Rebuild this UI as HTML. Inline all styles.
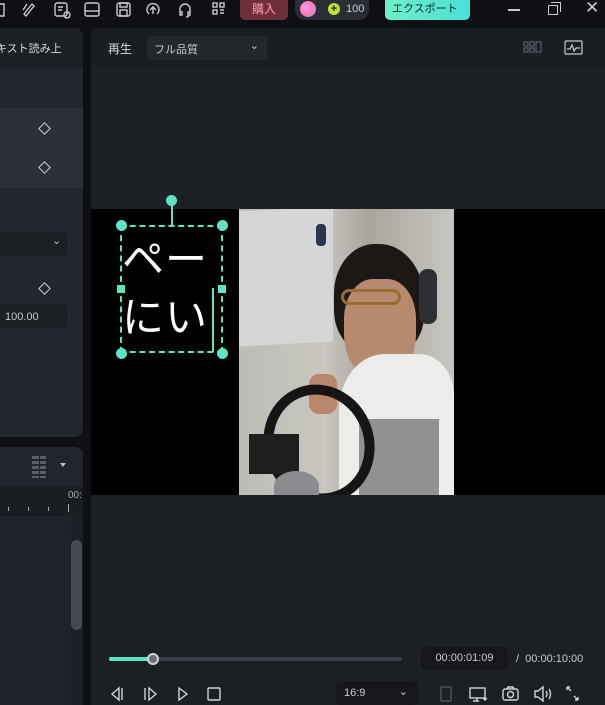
<!DOCTYPE html>
<html><head><meta charset="utf-8"><style>
*{margin:0;padding:0;box-sizing:border-box}
body{width:605px;height:705px;background:#0e1013;position:relative;overflow:hidden;font-family:"Liberation Sans","Noto Sans CJK JP",sans-serif;color:#d0d3d8}
.a{position:absolute}
</style></head><body>
<div class="a" style="left:0;top:0;width:605px;height:24px;background:#0e1013"></div>
<svg class="a" style="left:0;top:0" width="248" height="20" fill="none" stroke="#c8ccd2" stroke-width="1.4">
<path d="M-2 4h6v12h-6"/>
<path d="M24 14 L32 4 L34 6 L26 16Z M23 10 L27 4"/>
<rect x="55" y="3" width="12" height="13" rx="2"/><path d="M58 7h5M58 10h4"/><circle cx="67" cy="15" r="3"/>
<rect x="85" y="3" width="14" height="13" rx="2"/><path d="M85 11h14"/>
<rect x="117" y="3" width="13" height="13" rx="2"/><rect x="120" y="3" width="7" height="4"/><rect x="120" y="10" width="7" height="6"/>
<path d="M149 14 a6 6 0 1 1 8 0 M153 7v7 M150 10l3-3 3 3"/>
<path d="M180 13v-4a5 5 0 0 1 10 0v4 M180 12h2v3h-2z M188 12h2v3h-2z M189 15q0 2-3 2"/>
<rect x="213" y="3" width="4" height="4"/><rect x="220" y="3" width="4" height="4"/><rect x="213" y="10" width="4" height="4"/><path d="M220 10h4M220 13h4"/>
</svg>
<div class="a" style="left:240px;top:0;width:48px;height:20px;background:#6e2f3b;border-radius:0 0 5px 5px;color:#ff9aa8;font-size:12px;text-align:center;line-height:18px">購入</div>
<div class="a" style="left:295px;top:0;width:74px;height:20px;background:#2a2d33;border-radius:0 0 10px 10px"></div>
<div class="a" style="left:300px;top:1px;width:16px;height:16px;border-radius:50%;background:radial-gradient(circle at 40% 40%,#e8a0ff,#ff7ab0 50%,#6aa8ff)"></div>
<div class="a" style="left:328px;top:3px;width:12px;height:12px;border-radius:50%;background:#b9e23a;color:#222;font-size:11px;line-height:12px;text-align:center;font-weight:bold">+</div>
<div class="a" style="left:346px;top:3px;font-size:11px;color:#c8ccd2">100</div>
<div class="a" style="left:385px;top:0;width:85px;height:20px;background:linear-gradient(90deg,#6ef0c8,#48e0d8);border-radius:0 0 5px 5px;color:#0d2a26;font-size:11px;line-height:18px;padding-left:7px">エクスポート &nbsp;⌄</div>
<div class="a" style="left:508px;top:9px;width:12px;height:1.5px;background:#c8ccd2"></div>
<div class="a" style="left:548px;top:5px;width:10px;height:10px;border:1.4px solid #c8ccd2"></div>
<div class="a" style="left:551px;top:2px;width:10px;height:10px;border-top:1.4px solid #c8ccd2;border-right:1.4px solid #c8ccd2"></div>
<div class="a" style="left:585px;top:-2px;font-size:17px;color:#c8ccd2">✕</div>

<div class="a" style="left:0;top:28px;width:83px;height:409px;background:#23272d;border-radius:0 8px 8px 0;overflow:hidden">
 <div class="a" style="left:0;top:0;width:83px;height:40px;background:#1c1f24"></div>
 <div class="a" style="left:-4px;top:12px;font-size:11px;color:#d8dbe0;white-space:nowrap">キスト読み上</div>
 <div class="a" style="left:0;top:80px;width:83px;height:80px;background:#2c3138"></div>
 <div class="a" style="left:40px;top:96px;width:9px;height:9px;border:1.3px solid #d0d3d8;transform:rotate(45deg)"></div>
 <div class="a" style="left:40px;top:135px;width:9px;height:9px;border:1.3px solid #d0d3d8;transform:rotate(45deg)"></div>
 <div class="a" style="left:0;top:204px;width:67px;height:24px;background:#1b1e22;border-radius:0 5px 5px 0"></div>
 <div class="a" style="left:52px;top:206px;font-size:11px;color:#c0c4ca">⌄</div>
 <div class="a" style="left:40px;top:256px;width:9px;height:9px;border:1.3px solid #d0d3d8;transform:rotate(45deg)"></div>
 <div class="a" style="left:0;top:276px;width:67px;height:24px;background:#1b1e22;border-radius:0 5px 5px 0"></div>
 <div class="a" style="left:5px;top:283px;font-size:11px;color:#c8ccd2">100.00</div>
</div>
<div class="a" style="left:0;top:447px;width:83px;height:258px;background:#20242a;border-radius:0 8px 0 0;overflow:hidden">
 <div class="a" style="left:0;top:0;width:83px;height:39px;background:#22262c"></div>
 <div class="a" style="left:32px;top:9px;width:14px;height:22px;background:repeating-linear-gradient(#5a5f67 0 3px,transparent 3px 5px)"></div>
 <div class="a" style="left:38.5px;top:9px;width:1px;height:22px;background:#22262c"></div>
 <div class="a" style="left:60px;top:16px;border:3px solid transparent;border-top:4px solid #c0c4ca"></div>
 <div class="a" style="left:0;top:39px;width:83px;height:30px;background:#1a1d21"></div>
 <div class="a" style="left:68px;top:43px;font-size:10px;color:#a8acb2">00:</div>
 <div class="a" style="left:8px;top:60px;width:1px;height:4px;background:#aaa"></div>
 <div class="a" style="left:28px;top:60px;width:1px;height:4px;background:#aaa"></div>
 <div class="a" style="left:48px;top:60px;width:1px;height:4px;background:#aaa"></div>
 <div class="a" style="left:68px;top:57px;width:1px;height:8px;background:#aaa"></div>
 <div class="a" style="left:71px;top:69px;width:12px;height:189px;background:#1c1f23"></div>
 <div class="a" style="left:71px;top:93px;width:11px;height:90px;background:#464b53;border-radius:6px"></div>
</div>

<div class="a" style="left:91px;top:28px;width:514px;height:677px;background:#1c1f23;border-radius:8px 0 0 0;overflow:hidden">
 <div class="a" style="left:0;top:0;width:514px;height:40px;background:#1a1d21"></div>
 <div class="a" style="left:17px;top:12px;font-size:12px;color:#d8dbe0">再生</div>
 <div class="a" style="left:56px;top:8px;width:120px;height:24px;background:#24282d;border-radius:5px;font-size:11px;color:#c8ccd2;padding:5px 7px">フル品質<span style="position:absolute;right:8px;top:3px">⌄</span></div>
 <svg class="a" style="left:432px;top:12px" width="64" height="16" fill="none" stroke-width="1.2">
  <g stroke="#5a5f67"><rect x="1" y="2" width="4" height="4"/><rect x="7" y="2" width="4" height="4"/><rect x="1" y="8" width="4" height="4"/><rect x="7" y="8" width="4" height="4"/><rect x="13" y="2" width="5" height="10"/></g>
  <g stroke="#c8ccd2"><rect x="42" y="1" width="17" height="13" rx="1"/><path d="M44 9l3 0 2-4 2 6 2-3 4 0"/></g>
 </svg>
 <div class="a" style="left:0;top:40px;width:514px;height:141px;background:#1d2024"></div>
 <div class="a" style="left:0;top:181px;width:514px;height:286px;background:#000"></div>
 <div class="a" style="left:148px;top:181px;width:215px;height:286px;overflow:hidden;background:#b8b4aa">
  <div class="a" style="left:0;top:0;width:215px;height:286px;background:linear-gradient(90deg,#bdbcb6 0,#c8c6bf 40%,#a8a59c 60%,#c7c6c0 100%)"></div>
  <div class="a" style="left:0;top:0;width:94px;height:135px;background:#d4d6d8;transform:skewY(-3deg)"></div>
  <div class="a" style="left:77px;top:15px;width:10px;height:22px;background:#2a3550;border-radius:4px"></div>
  <div class="a" style="left:95px;top:35px;width:90px;height:110px;background:#1c1816;border-radius:45% 50% 35% 40%"></div>
  <div class="a" style="left:105px;top:70px;width:72px;height:100px;background:#b68a6e;border-radius:40% 40% 45% 45%"></div>
  <div class="a" style="left:102px;top:80px;width:60px;height:16px;border:3px solid #9a6a30;border-radius:8px"></div>
  <div class="a" style="left:180px;top:60px;width:18px;height:55px;background:#2d2f33;border-radius:8px"></div>
  <div class="a" style="left:100px;top:145px;width:115px;height:141px;background:#ececea;border-radius:40% 30% 0 0"></div>
  <div class="a" style="left:120px;top:210px;width:80px;height:76px;background:#555;opacity:.6"></div>
  <div class="a" style="left:70px;top:165px;width:28px;height:40px;background:#b8866a;border-radius:10px"></div>
  <div class="a" style="left:25px;top:175px;width:110px;height:120px;border:10px solid #151515;border-radius:50%;transform:rotate(-20deg)"></div>
  <div class="a" style="left:10px;top:225px;width:50px;height:40px;background:#1e1e1e"></div>
  <div class="a" style="left:35px;top:262px;width:45px;height:30px;background:#8a8c90;border-radius:50% 50% 0 0"></div>
 </div>
 <div class="a" style="left:29px;top:197px;width:103px;height:128px;border:2px dashed #5fe3c4"></div>
 <div class="a" style="left:80px;top:172px;width:2px;height:25px;background:#5fe3c4"></div>
 <div class="a" style="left:75px;top:167px;width:11px;height:11px;border-radius:50%;background:#5fe3c4"></div>
 <div class="a" style="left:25px;top:192px;width:11px;height:11px;border-radius:50%;background:#5fe3c4"></div>
 <div class="a" style="left:126px;top:192px;width:11px;height:11px;border-radius:50%;background:#5fe3c4"></div>
 <div class="a" style="left:25px;top:320px;width:11px;height:11px;border-radius:50%;background:#5fe3c4"></div>
 <div class="a" style="left:126px;top:320px;width:11px;height:11px;border-radius:50%;background:#5fe3c4"></div>
 <div class="a" style="left:26px;top:257px;width:8px;height:8px;background:#5fe3c4"></div>
 <div class="a" style="left:127px;top:257px;width:8px;height:8px;background:#5fe3c4"></div>
 <div class="a" style="left:121px;top:260px;width:1.5px;height:64px;background:#5fe3c4"></div>
 <div class="a" style="left:31px;top:203px;font-size:42px;line-height:58px;color:#fff;letter-spacing:1px;white-space:nowrap">ペー<br>にい</div>
 <div class="a" style="left:0;top:467px;width:514px;height:210px;background:#1c1f23"></div>
 <div class="a" style="left:18px;top:629px;width:293px;height:4px;background:#3a3e45;border-radius:2px"></div>
 <div class="a" style="left:18px;top:629px;width:44px;height:4px;background:#5fe3c4;border-radius:2px"></div>
 <div class="a" style="left:56px;top:625px;width:12px;height:12px;border-radius:50%;background:#6a6e75;border:2px solid #d0d3d8"></div>
 <div class="a" style="left:330px;top:619px;width:87px;height:23px;background:#15171a;border-radius:5px;font-size:11px;color:#c8ccd2;text-align:center;line-height:23px">00:00:01:09</div>
 <div class="a" style="left:425px;top:625px;font-size:11px;color:#c8ccd2">/ &nbsp;00:00:10:00</div>
 <svg class="a" style="left:18px;top:656px" width="120" height="20" fill="none" stroke="#d0d3d8" stroke-width="1.4">
  <path d="M10 4 L3 10 L10 16Z M13 4v12"/><path d="M36 4v12 M40 4 L47 10 L40 16Z"/><path d="M70 4 L78 10 L70 16Z"/><rect x="99" y="4" width="12" height="12" rx="1"/>
 </svg>
 <div class="a" style="left:245px;top:653px;width:82px;height:24px;background:#15171a;border-radius:5px;font-size:11px;color:#c8ccd2;padding:6px 8px">16:9<span style="position:absolute;right:10px;top:4px">⌄</span></div>
 <svg class="a" style="left:345px;top:656px" width="150" height="20" fill="none" stroke="#d0d3d8" stroke-width="1.4">
  <rect x="5" y="3" width="10" height="14" rx="1" stroke="#555"/>
  <rect x="34" y="4" width="15" height="10"/><path d="M41 14v3 M37 17h6"/><path d="M47 14l2 2 2-2" fill="#d0d3d8"/>
  <rect x="67" y="5" width="15" height="11" rx="2"/><circle cx="74.5" cy="10.5" r="3"/><path d="M71 5l1-2h5l1 2"/>
  <path d="M99 7h3l5-4v14l-5-4h-3z M110 7q2 3 0 6 M113 5q3 5 0 10"/>
  <path d="M131 3l4 4 M131 3h3 M131 3v3 M142 16l-4-4 M142 16h-3 M142 16v-3"/>
 </svg>
</div>
</body></html>
